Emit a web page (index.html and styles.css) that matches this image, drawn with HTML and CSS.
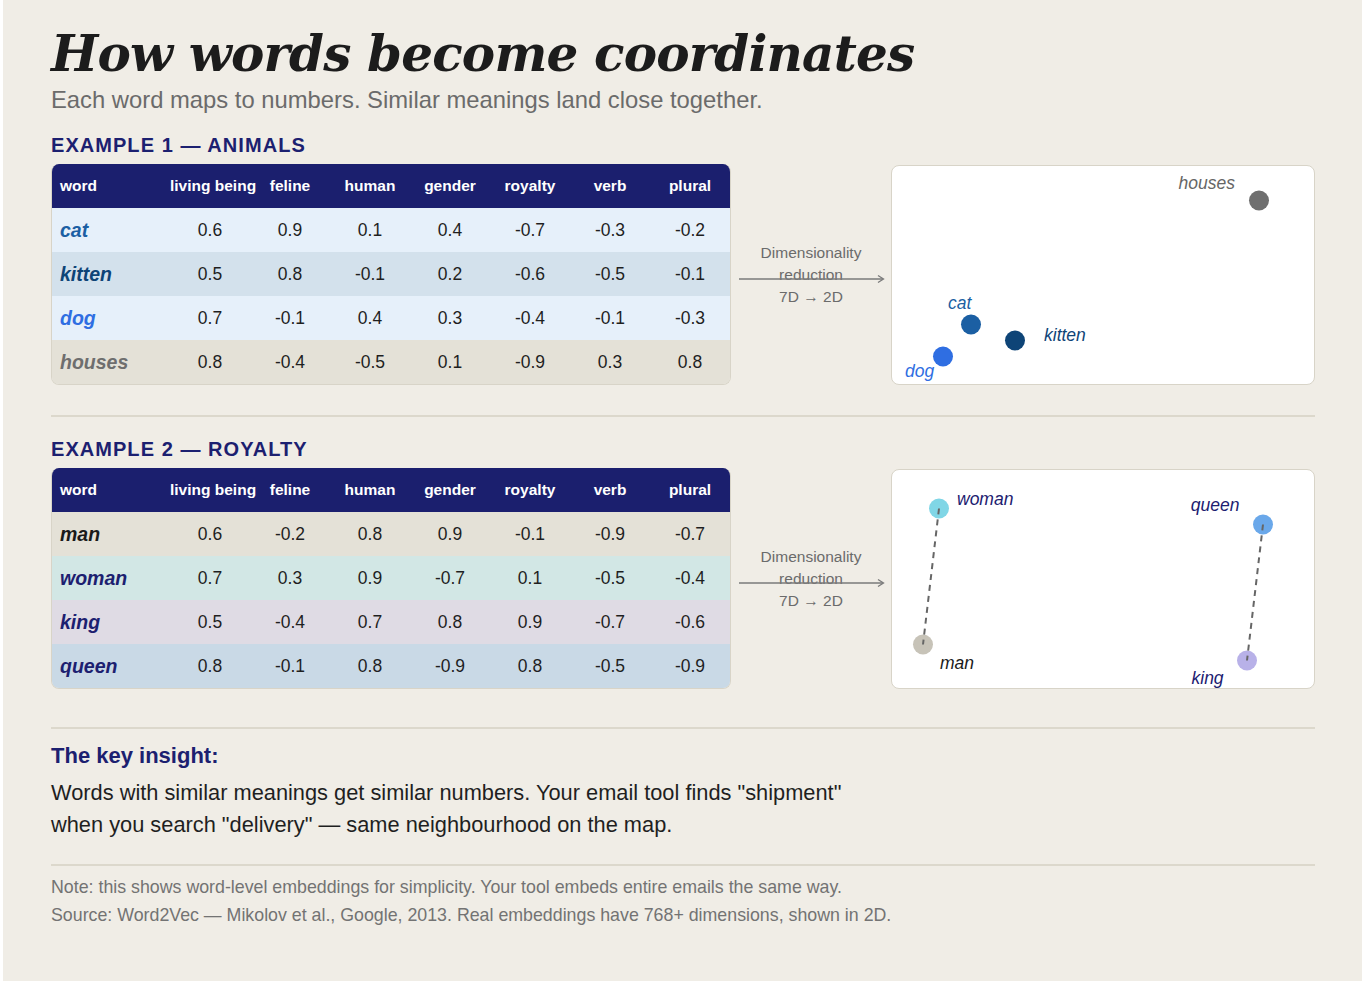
FILE: index.html
```html
<!DOCTYPE html>
<html lang="en">
<head>
<meta charset="utf-8">
<title>How words become coordinates</title>
<link rel="stylesheet" href="styles.css">
</head>
<body>
<main class="page">
  <h1 class="title">How words become coordinates</h1>
  <p class="subtitle">Each word maps to numbers. Similar meanings land close together.</p>

  <section class="example">
    <h2 class="example-title">EXAMPLE 1 — ANIMALS</h2>
    <div class="example-row">
      <div class="tbl">
        <table>
          <thead>
            <tr><th class="w">word</th><th>living being</th><th>feline</th><th>human</th><th>gender</th><th>royalty</th><th>verb</th><th>plural</th></tr>
          </thead>
          <tbody>
            <tr class="r-cat"><td class="w">cat</td><td>0.6</td><td>0.9</td><td>0.1</td><td>0.4</td><td>-0.7</td><td>-0.3</td><td>-0.2</td></tr>
            <tr class="r-kitten"><td class="w">kitten</td><td>0.5</td><td>0.8</td><td>-0.1</td><td>0.2</td><td>-0.6</td><td>-0.5</td><td>-0.1</td></tr>
            <tr class="r-dog"><td class="w">dog</td><td>0.7</td><td>-0.1</td><td>0.4</td><td>0.3</td><td>-0.4</td><td>-0.1</td><td>-0.3</td></tr>
            <tr class="r-houses"><td class="w">houses</td><td>0.8</td><td>-0.4</td><td>-0.5</td><td>0.1</td><td>-0.9</td><td>0.3</td><td>0.8</td></tr>
          </tbody>
        </table>
      </div>
      <div class="reduce">
        <div class="reduce-text">Dimensionality<br>reduction<br>7D → 2D</div>
        <svg class="reduce-arrow" width="146" height="10" viewBox="0 0 146 10"><line x1="0" y1="5" x2="144" y2="5" stroke="#7a7a7a" stroke-width="1.3"/><polyline points="139,1.5 144.5,5 139,8.5" fill="none" stroke="#7a7a7a" stroke-width="1.3"/></svg>
      </div>
      <div class="plot">
        <svg width="422" height="218" viewBox="1 1 422 218">
          <text x="344" y="24" text-anchor="end" class="lbl" fill="#666666">houses</text>
          <circle cx="368" cy="35.5" r="10" fill="#6f6f6f"/>
          <text x="57" y="143.5" class="lbl" fill="#1b5fa3">cat</text>
          <circle cx="80" cy="159.5" r="10" fill="#1b5fa3"/>
          <circle cx="124" cy="175.5" r="10" fill="#0e4477"/>
          <text x="153" y="176" class="lbl" fill="#0e4477">kitten</text>
          <circle cx="52" cy="191.5" r="10" fill="#2f6ee2"/>
          <text x="14" y="212" class="lbl" fill="#2f6ee2">dog</text>
        </svg>
      </div>
    </div>
  </section>

  <hr class="divider">

  <section class="example">
    <h2 class="example-title">EXAMPLE 2 — ROYALTY</h2>
    <div class="example-row">
      <div class="tbl">
        <table>
          <thead>
            <tr><th class="w">word</th><th>living being</th><th>feline</th><th>human</th><th>gender</th><th>royalty</th><th>verb</th><th>plural</th></tr>
          </thead>
          <tbody>
            <tr class="r-man"><td class="w">man</td><td>0.6</td><td>-0.2</td><td>0.8</td><td>0.9</td><td>-0.1</td><td>-0.9</td><td>-0.7</td></tr>
            <tr class="r-woman"><td class="w">woman</td><td>0.7</td><td>0.3</td><td>0.9</td><td>-0.7</td><td>0.1</td><td>-0.5</td><td>-0.4</td></tr>
            <tr class="r-king"><td class="w">king</td><td>0.5</td><td>-0.4</td><td>0.7</td><td>0.8</td><td>0.9</td><td>-0.7</td><td>-0.6</td></tr>
            <tr class="r-queen"><td class="w">queen</td><td>0.8</td><td>-0.1</td><td>0.8</td><td>-0.9</td><td>0.8</td><td>-0.5</td><td>-0.9</td></tr>
          </tbody>
        </table>
      </div>
      <div class="reduce">
        <div class="reduce-text">Dimensionality<br>reduction<br>7D → 2D</div>
        <svg class="reduce-arrow" width="146" height="10" viewBox="0 0 146 10"><line x1="0" y1="5" x2="144" y2="5" stroke="#7a7a7a" stroke-width="1.3"/><polyline points="139,1.5 144.5,5 139,8.5" fill="none" stroke="#7a7a7a" stroke-width="1.3"/></svg>
      </div>
      <div class="plot">
        <svg width="422" height="218" viewBox="1 1 422 218">
          <circle cx="48" cy="39.5" r="10" fill="#80d6e6"/>
          <circle cx="32" cy="175.5" r="10" fill="#c7c3b8"/>
          <circle cx="372" cy="55.5" r="10" fill="#6aa8ea"/>
          <circle cx="356" cy="191.5" r="10" fill="#b8b1e8"/>
          <line x1="48" y1="39.5" x2="32" y2="175.5" stroke="#666" stroke-width="2" stroke-dasharray="6 5"/>
          <line x1="372" y1="55.5" x2="356" y2="191.5" stroke="#666" stroke-width="2" stroke-dasharray="6 5"/>
          <text x="66" y="35.5" class="lbl" fill="#1c2070">woman</text>
          <text x="49" y="199.5" class="lbl" fill="#1a1a1a">man</text>
          <text x="348.5" y="41.5" text-anchor="end" class="lbl" fill="#1c2070">queen</text>
          <text x="300.5" y="214.5" class="lbl" fill="#1c2070">king</text>
        </svg>
      </div>
    </div>
  </section>

  <hr class="divider divider-wide">

  <section class="insight">
    <h3 class="insight-title">The key insight:</h3>
    <p class="insight-text">Words with similar meanings get similar numbers. Your email tool finds "shipment" when you search "delivery" — same neighbourhood on the map.</p>
  </section>

  <hr class="divider divider-notes">

  <footer class="notes">
    <p>Note: this shows word-level embeddings for simplicity. Your tool embeds entire emails the same way.</p>
    <p>Source: Word2Vec — Mikolov et al., Google, 2013. Real embeddings have 768+ dimensions, shown in 2D.</p>
  </footer>
</main>
</body>
</html>
```

FILE: styles.css
```css
html {
  background: #ffffff;
}

body {
  margin: 0 0 0 3px;
  background: #f0ede6;
  min-height: 981px;
  font-family: "Liberation Sans", Arial, sans-serif;
  color: #1f1f1f;
}

.page {
  padding: 25px 47px 40px 48px;
}

.title {
  margin: 0;
  font-family: "DejaVu Serif", Georgia, serif;
  font-weight: bold;
  font-style: italic;
  font-size: 50px;
  line-height: 58px;
  color: #1c1c1c;
  letter-spacing: -0.82px;
}

.subtitle {
  margin: 3px 0 0;
  font-size: 23.8px;
  line-height: 28px;
  color: #6b6b6b;
}

.example-title {
  margin: 0 0 7px;
  font-size: 20px;
  line-height: 24px;
  font-weight: bold;
  letter-spacing: 1.05px;
  color: #1c2070;
}

.subtitle + .example {
  margin-top: 19px;
}

.example-row {
  display: grid;
  grid-template-columns: 680px 160px 1fr;
  align-items: center;
}

.tbl {
  border: 1px solid #d8d4c8;
  border-top: none;
  border-radius: 8px;
  overflow: hidden;
}

.tbl table {
  width: 100%;
  border-collapse: separate;
  border-spacing: 0;
  table-layout: fixed;
}

.tbl th {
  background: #1b1f6e;
  color: #ffffff;
  font-size: 15.5px;
  font-weight: bold;
  height: 44px;
  padding: 0;
  text-align: center;
  width: 80px;
  white-space: nowrap;
}

.tbl th.w {
  width: 110px;
  text-align: left;
  padding-left: 8px;
}

.tbl td {
  height: 44px;
  padding: 0;
  text-align: center;
  font-size: 17.5px;
  color: #1f1f1f;
}

.tbl td.w {
  text-align: left;
  padding-left: 8px;
  font-size: 19.5px;
  font-weight: bold;
  font-style: italic;
}

.r-cat { background: #e6f0fa; }
.r-cat .w { color: #1b5fa3; }
.r-kitten { background: #d3e1ec; }
.r-kitten .w { color: #0e4477; }
.r-dog { background: #e6f0fa; }
.r-dog .w { color: #2f6ee2; }
.r-houses { background: #e4e1d7; }
.r-houses .w { color: #6e6e6e; }

.r-man { background: #e4e1d7; }
.r-man .w { color: #1a1a1a; }
.r-woman { background: #d2e7e5; }
.r-woman .w { color: #1c2070; }
.r-king { background: #dfdbe4; }
.r-king .w { color: #1c2070; }
.r-queen { background: #c9d9e6; }
.r-queen .w { color: #1c2070; }

.reduce {
  position: relative;
  align-self: stretch;
  display: flex;
  align-items: center;
  justify-content: center;
}

.reduce-text {
  font-size: 15.5px;
  line-height: 22px;
  color: #6b6b6b;
  text-align: center;
}

.reduce-arrow {
  position: absolute;
  left: 8px;
  top: calc(50% - 1px);
}

.plot {
  height: 220px;
  box-sizing: border-box;
  background: #ffffff;
  border: 1px solid #d8d4c8;
  border-radius: 8px;
  overflow: hidden;
}

.plot svg {
  display: block;
}

.lbl {
  font-family: "Liberation Sans", Arial, sans-serif;
  font-style: italic;
  font-size: 17.5px;
}

.divider {
  border: none;
  height: 2px;
  background: #dcd8cc;
  margin: 30px 0 20px;
}

.divider-wide {
  margin: 38px 0 13px;
}

.insight-title {
  margin: 0;
  font-size: 22px;
  line-height: 28px;
  font-weight: bold;
  color: #1c2070;
}

.insight-text {
  margin: 7px 0 0;
  max-width: 800px;
  font-size: 21.8px;
  line-height: 32px;
  color: #1f1f1f;
}

.divider-notes {
  margin: 23px 0 7px;
}

.notes p {
  margin: 0;
  font-size: 17.8px;
  line-height: 28px;
  color: #737373;
}
```
